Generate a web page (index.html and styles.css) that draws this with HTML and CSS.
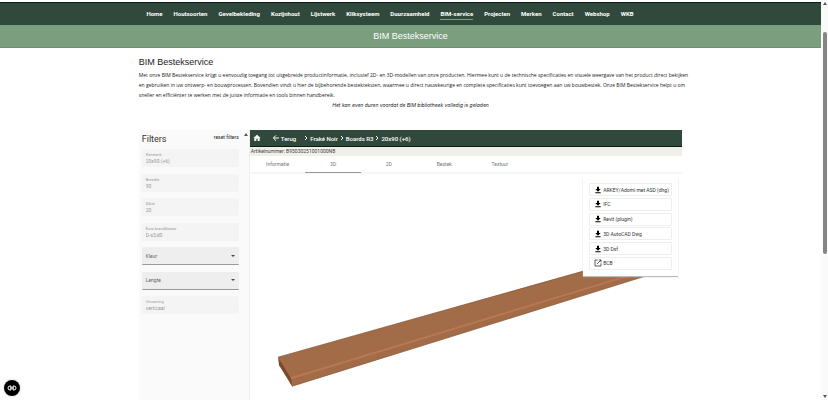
FILE: index.html
```html
<!DOCTYPE html>
<html lang="nl">
<head>
    <meta charset="utf-8">
    <title>BIM Bestekservice</title>
    <link rel="stylesheet" href="styles.css">
</head>

<body>
    <div class="page">
        <nav class="menu">
            <a href="#">Home</a>
            <a href="#">Houtsoorten</a>
            <a href="#">Gevelbekleding</a>
            <a href="#">Kozijnhout</a>
            <a href="#">Lijstwerk</a>
            <a href="#">Kliksysteem</a>
            <a href="#">Duurzaamheid</a>
            <a href="#" class="active">BIM-service</a>
            <a href="#">Projecten</a>
            <a href="#">Merken</a>
            <a href="#">Contact</a>
            <a href="#">Webshop</a>
            <a href="#">WKB</a>
        </nav>
        <div class="banner">BIM Bestekservice</div>

        <main class="container">
            <section class="intro">
                <h1>BIM Bestekservice</h1>
                <p>
                    Met onze BIM Bestekservice krijgt u eenvoudig toegang tot uitgebreide productinformatie, inclusief 2D- en 3D-modellen van onze producten. Hiermee kunt u de technische specificaties en visuele weergave van het product direct bekijken<br>
                    en gebruiken in uw ontwerp- en bouwprocessen. Bovendien vindt u hier de bijbehorende bestekteksten, waarmee u direct nauwkeurige en complete specificaties kunt toevoegen aan uw bouwbestek. Onze BIM Bestekservice helpt u om<br>
                    sneller en efficiënter te werken met de juiste informatie en tools binnen handbereik.
                </p>
                <p class="note">Het kan even duren voordat de BIM bibliotheek volledig is geladen</p>
            </section>

            <div class="library">
                <aside class="filters">
                    <form class="filter-form">
                        <div class="filter-head">
                            <h2>Filters</h2>
                            <button type="reset">reset filters</button>
                        </div>
                        <div class="fields">
                            <div class="field">
                                <label for="kenmerk">Kenmerk</label>
                                <input type="text" id="kenmerk" value="20x90 (+6)" disabled>
                            </div>
                            <div class="field">
                                <label for="breedte">Breedte</label>
                                <input type="text" id="breedte" value="90" disabled>
                            </div>
                            <div class="field">
                                <label for="dikte">Dikte</label>
                                <input type="text" id="dikte" value="20" disabled>
                            </div>
                            <div class="field">
                                <label for="brandklasse">Euro brandklasse</label>
                                <input type="text" id="brandklasse" value="D-s3,d0" disabled>
                            </div>
                            <div class="field choice">
                                <label for="kleur">Kleur</label>
                                <select id="kleur"><option></option></select>
                            </div>
                            <div class="field choice">
                                <label for="lengte">Lengte</label>
                                <select id="lengte"><option></option></select>
                            </div>
                            <div class="field">
                                <label for="uitvoering">Uitvoering</label>
                                <input type="text" id="uitvoering" value="verticaal" disabled>
                            </div>
                        </div>
                    </form>
                    <div class="filter-scroll"><span class="arrow-up"></span></div>
                </aside>

                <section class="product">
                    <div class="toolbar">
                        <a href="#" class="home" aria-label="Home">
                            <svg width="8" height="8" viewBox="0 0 24 24"><path d="M10 21v-7h4v7h6v-9h3L12 2 1 12h3v9z"/></svg>
                        </a>
                        <a href="#" class="back">
                            <svg width="8" height="8" viewBox="0 0 24 24"><path class="line" d="M21 12H5M12 4l-8 8 8 8"/></svg>
                            Terug
                        </a>
                        <div class="crumbs">
                            <svg width="4" height="6" viewBox="0 0 4 6"><path class="chevron" d="M1 1l2 2-2 2"/></svg>
                            <a href="#">Fraké Noir</a>
                            <svg width="4" height="6" viewBox="0 0 4 6"><path class="chevron" d="M1 1l2 2-2 2"/></svg>
                            <a href="#">Boards R3</a>
                            <svg width="4" height="6" viewBox="0 0 4 6"><path class="chevron" d="M1 1l2 2-2 2"/></svg>
                            <a href="#">20x90 (+6)</a>
                        </div>
                    </div>
                    <div class="article">Artikelnummer: B95030251001000NB</div>
                    <div class="tabs">
                        <div class="tab-list">
                            <button type="button">Informatie</button>
                            <button type="button" class="selected">3D</button>
                            <button type="button">2D</button>
                            <button type="button">Bestek</button>
                            <button type="button">Textuur</button>
                        </div>
                    </div>
                    <div class="viewer">
                        <svg class="board" viewBox="0 0 432 226">
                            <path fill="#a26c48" d="M28 183L333 97l70-19 8 19L42 212z"/>
                            <path fill="#7c4a2a" d="M28 183l13 21 1 8-13-21z"/>
                            <path fill="none" stroke="#b87850" stroke-width="2" d="M41 204L380 101"/>
                            <path fill="none" stroke="#85502f" stroke-width=".7" d="M28 183L333 97M42 212l353-110"/>
                        </svg>
                        <div class="downloads">
                            <button type="button"><svg width="8" height="8" viewBox="0 0 24 24"><path d="M9 2h6v7h5l-8 8-8-8h5zM4 19h16v3H4z"/></svg>ARKEY/Adomi met ASD (dhg)</button>
                            <button type="button"><svg width="8" height="8" viewBox="0 0 24 24"><path d="M9 2h6v7h5l-8 8-8-8h5zM4 19h16v3H4z"/></svg>IFC</button>
                            <button type="button"><svg width="8" height="8" viewBox="0 0 24 24"><path d="M9 2h6v7h5l-8 8-8-8h5zM4 19h16v3H4z"/></svg>Revit (plugin)</button>
                            <button type="button"><svg width="8" height="8" viewBox="0 0 24 24"><path d="M9 2h6v7h5l-8 8-8-8h5zM4 19h16v3H4z"/></svg>3D AutoCAD Dwg</button>
                            <button type="button"><svg width="8" height="8" viewBox="0 0 24 24"><path d="M9 2h6v7h5l-8 8-8-8h5zM4 19h16v3H4z"/></svg>3D Dxf</button>
                            <button type="button"><svg width="8" height="8" viewBox="0 0 24 24"><path class="frame" d="M11 3H3v18h18v-8M14 3h7v7M21 3L9 15"/></svg>BCB</button>
                        </div>
                    </div>
                </section>
            </div>
        </main>
    </div>

    <div class="scrollbar">
        <span class="arrow-up"></span>
        <span class="thumb"></span>
        <span class="arrow-down"></span>
    </div>

    <button type="button" class="cookie" aria-label="Cookies">
        <svg width="10" height="6" viewBox="0 0 10 6"><path d="M4 1H3a2 2 0 0 0 0 4h1zM6 1h1a2 2 0 0 1 0 4H6zM3 3h4"/></svg>
    </button>
</body>
</html>
```
FILE: styles.css
```css
*{
    box-sizing: border-box;
}
body{
    display: flex;
    height: 100vh;
    margin: 0;
    overflow: hidden;
    background-color: #fff;
    color: #222;
    font-family: "Liberation Sans", Arial, sans-serif;
    font-size: 5px;
}
a{
    color: inherit;
    text-decoration: none;
}
button{
    padding: 0;
    border: 0;
    background: none;
    color: inherit;
    font: inherit;
}
.page{
    display: flex;
    flex: 1;
    flex-direction: column;
    min-width: 0;
    padding-top: 2px;
}
.menu{
    display: flex;
    flex: none;
    justify-content: center;
    align-items: center;
    gap: 11px;
    height: 23px;
    padding-right: 41px;
    border-top: 1px solid #0b1a12;
    background-color: #31493c;
    color: #fff;
    font-family: Roboto, sans-serif;
    font-size: 6px;
    font-weight: bold;
}
.menu a{
    padding: 2px 0;
    border-bottom: 1px solid transparent;
}
.menu a.active{
    border-color: #7a9e7e;
}
.banner{
    flex: none;
    height: 23px;
    border-bottom: 1px solid #6b9270;
    background-color: #7a9e7e;
    color: #fff;
    font-size: 9px;
    line-height: 23px;
    text-align: center;
}
.container{
    display: flex;
    flex: 1;
    flex-direction: column;
    width: 66.2%;
    min-height: 0;
    margin: 0 auto;
}
.intro{
    padding: 8px 0 20px;
}
.intro h1{
    margin: 0 0 2px;
    font-size: 9px;
    font-weight: normal;
    line-height: 12px;
}
.intro p{
    margin: 0;
    font-family: "Open Sans", sans-serif;
    line-height: 10px;
    white-space: nowrap;
}
.intro .note{
    font-family: Inter, sans-serif;
    font-style: italic;
    text-align: center;
}
.library{
    display: flex;
    flex: 1;
    min-height: 0;
    font-family: Roboto, sans-serif;
}
.filters{
    display: flex;
    width: 111px;
    border-right: 1px solid #eee;
    background-color: #fafafa;
}
.filter-form{
    flex: 1;
    padding: 4px 0 0 3px;
}
.filter-head{
    display: flex;
    justify-content: space-between;
    height: 15px;
}
.filter-head h2{
    margin: 0;
    color: #333;
    font-size: 9px;
    font-weight: normal;
    line-height: 10px;
}
.filter-head button{
    height: 6px;
    line-height: 6px;
}
.fields{
    display: flex;
    flex-direction: column;
    justify-content: space-between;
    height: 165px;
}
.field{
    display: flex;
    flex-direction: column;
    height: 18px;
    padding: 4px 4px 0;
    border-radius: 1px;
    background-color: #f4f4f4;
    color: #999;
}
.field label{
    font-size: 4px;
    line-height: 4px;
}
.field input{
    width: 100%;
    height: 8px;
    padding: 0;
    border: 0;
    background: none;
    color: #999;
    font: 5px Roboto, sans-serif;
}
.choice{
    flex-direction: row;
    align-items: center;
    padding: 0 4px;
    border-bottom: 1px solid #999;
    background-color: #eee;
    color: #666;
}
.choice label{
    font-size: 5px;
}
.choice select{
    flex: 1;
    min-width: 0;
    height: 16px;
    border: 0;
    background: none;
    font-size: 5px;
    appearance: none;
}
.choice::after{
    content: "";
    border: 2px solid transparent;
    border-top-color: #444;
    border-bottom: 0;
}
.filter-scroll{
    width: 10px;
    padding: 3px 0 0 4px;
}
.arrow-up, .arrow-down{
    display: block;
    width: 4px;
    margin: 0 auto;
    border: 2px solid transparent;
}
.arrow-up{
    border-top: 0;
    border-bottom: 3px solid #555;
}
.arrow-down{
    border-top: 3px solid #555;
    border-bottom: 0;
}
.product{
    display: flex;
    flex: 1;
    flex-direction: column;
    min-width: 0;
}
.toolbar{
    display: flex;
    align-items: center;
    height: 17px;
    padding-left: 3px;
    border-bottom: 1px solid #0b1a12;
    background-color: #31493c;
    color: #fff;
    font-size: 6px;
    font-weight: 500;
}
.toolbar svg{
    fill: #fff;
}
.toolbar .line, .toolbar .chevron{
    fill: none;
    stroke: #fff;
}
.toolbar .line{
    stroke-width: 3;
}
.toolbar a, .crumbs{
    display: flex;
    align-items: center;
}
.home{
    padding-right: 11px;
}
.back{
    gap: 1px;
    padding-right: 8px;
}
.crumbs{
    gap: 2px;
}
.article{
    height: 9px;
    padding-left: 1px;
    background-color: #efefe9;
    color: #444;
    line-height: 9px;
}
.tabs{
    height: 18px;
    border-bottom: 2px solid #f6f6f6;
}
.tab-list{
    display: flex;
    width: 278px;
    height: 17px;
}
.tab-list button{
    flex: 1;
    border-bottom: 1px solid transparent;
    color: #777;
}
.tab-list .selected{
    border-color: #999;
}
.viewer{
    position: relative;
    flex: 1;
    min-height: 0;
    overflow: hidden;
}
.board{
    display: block;
    width: 100%;
}
/* download card lies over the 3D model */
.downloads{
    position: absolute;
    top: 3px;
    right: 4px;
    display: flex;
    flex-direction: column;
    justify-content: space-between;
    width: 95px;
    height: 99px;
    padding: 6px;
    background-color: #fff;
    box-shadow: 0 1px 1px #bbb;
}
.downloads button{
    display: flex;
    align-items: center;
    gap: 1px;
    height: 13px;
    padding-left: 4px;
    border: 1px solid #eee;
    border-radius: 1px;
    color: #333;
}
.downloads .frame{
    fill: none;
    stroke: #111;
    stroke-width: 2;
}
.scrollbar{
    display: flex;
    flex-direction: column;
    width: 7px;
    padding: 2px 0;
    background-color: #fafafa;
}
.scrollbar .thumb{
    width: 4px;
    height: 56%;
    margin: 27px auto auto;
    border-radius: 2px;
    background-color: #858585;
}
.cookie{
    position: fixed;
    bottom: 4px;
    left: 4px;
    display: flex;
    justify-content: center;
    align-items: center;
    width: 16px;
    height: 16px;
    border-radius: 50%;
    background-color: #000;
    box-shadow: 0 0 3px #ccc;
}
.cookie path{
    fill: none;
    stroke: #fff;
}
```
